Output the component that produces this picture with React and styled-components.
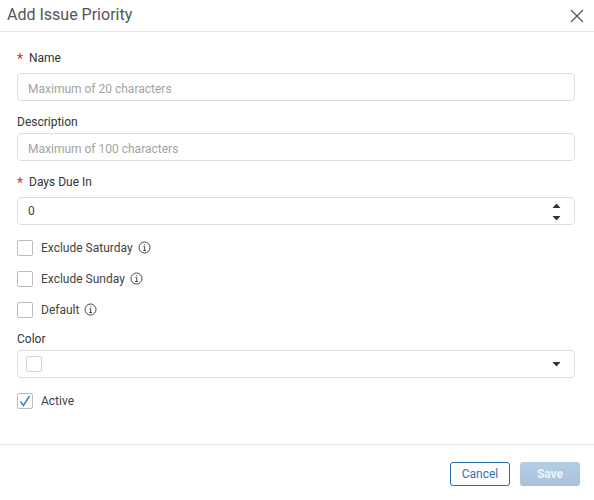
import React from "react";
import styled, { createGlobalStyle } from "styled-components";

const Global = createGlobalStyle`
  html, body { margin: 0; padding: 0; background: #fff; }
  body { font-family: Roboto, "Liberation Sans", sans-serif; }
  * { box-sizing: border-box; }
`;

const Dialog = styled.div`
  width: 594px;
  height: 500px;
  display: flex;
  flex-direction: column;
  background: #fff;
`;

const Header = styled.header`
  height: 32px;
  flex: none;
  display: flex;
  align-items: center;
  justify-content: space-between;
  padding: 0 10px 3px 7px;
  border-bottom: 1px solid #e6e6e6;
`;

const Title = styled.h2`
  margin: 0;
  font-size: 16px;
  font-weight: 400;
  color: #555;
`;

const Close = styled.button`
  width: 14px;
  height: 14px;
  padding: 0;
  border: 0;
  background: none;
  display: flex;
  margin-top: 3px;
`;

const Form = styled.form`
  flex: 1;
  display: flex;
  flex-direction: column;
  padding: 0 19px 0 17px;
`;

const Label = styled.label`
  display: flex;
  align-items: center;
  height: 16px;
  margin-top: ${(p) => p.$top}px;
  margin-bottom: ${(p) => p.$bottom}px;
  font-size: 12px;
  color: #333;
`;

const Star = styled.span`
  color: #c8402c;
  font-size: 14px;
  width: 12px;
  line-height: 16px;
  padding-top: 2px;
`;

const inputBox = `
  width: 100%;
  height: 28px;
  border: 1px solid #dedede;
  border-radius: 4px;
  background: #fff;
`;

const TextInput = styled.input`
  ${inputBox}
  display: block;
  padding: 3px 10px 0;
  font: 12px Roboto, sans-serif;
  color: #333;
  outline: none;
  &::placeholder { color: #a3a3a3; opacity: 1; }
`;

const Spin = styled.div`
  ${inputBox}
  display: flex;
  align-items: center;
  justify-content: space-between;
  padding: 0 13px 0 10px;
  font-size: 12px;
  color: #444;
`;

const Select = styled.div`
  ${inputBox}
  display: flex;
  align-items: center;
  justify-content: space-between;
  padding: 0 13px 0 8px;
`;

const Swatch = styled.span`
  width: 16px;
  height: 16px;
  border: 1px solid #d4d4d4;
  border-radius: 2px;
  background: #fff;
`;

const Arrows = styled.span`
  display: flex;
  flex-direction: column;
  gap: 8px;
  padding-top: 1px;
`;

const CheckRow = styled.div`
  display: flex;
  align-items: center;
  height: 16px;
  margin-top: ${(p) => p.$top}px;
  font-size: 12px;
  color: #444;
`;

const Box = styled.span`
  width: 16px;
  height: 16px;
  margin-right: 8px;
  border: 1px solid #bdbdbd;
  border-radius: 2px;
  background: #fff;
  display: flex;
  align-items: center;
  justify-content: center;
`;

const InfoIcon = styled.svg`
  width: 13px;
  height: 13px;
  margin-left: 5px;
  margin-top: -1px;
  fill: none;
  stroke: #444;
`;

const Footer = styled.footer`
  height: 56px;
  flex: none;
  display: flex;
  justify-content: flex-end;
  gap: 10px;
  padding: 17px 14px 0 0;
  border-top: 1px solid #e6e6e6;
`;

const Button = styled.button`
  width: 60px;
  height: 24px;
  border-radius: 3px;
  font: ${(p) => (p.$primary ? 700 : 400)} 12px Roboto, sans-serif;
  padding: 0;
  color: ${(p) => (p.$primary ? "#eef4f9" : "#3472a8")};
  background: ${(p) => (p.$primary ? "linear-gradient(#b2cfe7, #a9c1d9)" : "#fff")};
  border: ${(p) => (p.$primary ? "0" : "1px solid #2a6ca6")};
`;

const Caret = ({ up }) => (
  <svg width="9" height="5" viewBox="0 0 9 5">
    <path d={up ? "M0.5 5 L4.5 0.5 L8.5 5 Z" : "M0.5 0 L8.5 0 L4.5 4.5 Z"} fill="#333" />
  </svg>
);

const Info = () => (
  <InfoIcon viewBox="0 0 13 13">
    <circle cx="6.5" cy="6.5" r="5.5" strokeWidth="1" />
    <path d="M5.4 5.7 H6.7 V9.4 M5.2 9.5 H8" strokeWidth="1" />
    <path d="M6.2 3.3 H7.2 V4.3 H6.2 Z" fill="#444" stroke="none" />
  </InfoIcon>
);

const Check = ({ label, top, checked, info }) => (
  <CheckRow $top={top}>
    <Box>
      {checked && (
        <svg width="12" height="12" viewBox="0 0 12 12">
          <path d="M1.5 6.5 L4.5 10.5 L10.5 1" fill="none" stroke="#3b7fc0" strokeWidth="1.5" />
        </svg>
      )}
    </Box>
    {label}
    {info && <Info />}
  </CheckRow>
);

export default function App() {
  return (
    <Dialog>
      <Global />
      <Header>
        <Title>Add Issue Priority</Title>
        <Close type="button" aria-label="Close">
          <svg width="14" height="14" viewBox="0 0 14 14">
            <path d="M1 1 L13 13 M13 1 L1 13" stroke="#555" strokeWidth="1.3" fill="none" />
          </svg>
        </Close>
      </Header>
      <Form>
        <Label $top={18} $bottom={7}><Star>*</Star>Name</Label>
        <TextInput placeholder="Maximum of 20 characters" />
        <Label $top={13} $bottom={3}>Description</Label>
        <TextInput placeholder="Maximum of 100 characters" />
        <Label $top={13} $bottom={7}><Star>*</Star>Days Due In</Label>
        <Spin>
          0
          <Arrows><Caret up /><Caret /></Arrows>
        </Spin>
        <Check label="Exclude Saturday" top={15} info />
        <Check label="Exclude Sunday" top={15} info />
        <Check label="Default" top={15} info />
        <Label $top={13} $bottom={3}>Color</Label>
        <Select>
          <Swatch />
          <Caret />
        </Select>
        <Check label="Active" top={15} checked />
      </Form>
      <Footer>
        <Button type="button">Cancel</Button>
        <Button type="button" $primary>Save</Button>
      </Footer>
    </Dialog>
  );
}
